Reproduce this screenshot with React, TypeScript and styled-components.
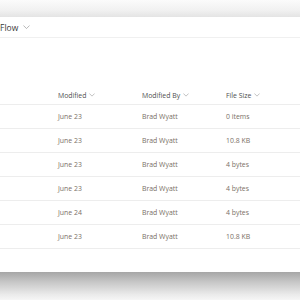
import React from "react";
import styled, { createGlobalStyle } from "styled-components";

const Global = createGlobalStyle`
  html, body { margin: 0; padding: 0; background: #ffffff; }
  body { width: 300px; height: 300px; overflow: hidden; font-family: "Open Sans", "Noto Sans", sans-serif; }
`;

const Page = styled.div`
  display: flex;
  flex-direction: column;
  width: 300px;
  height: 300px;
`;

const TopStrip = styled.div`
  height: 17px;
  background: linear-gradient(#fbfbfb, #f1f1f1 60%, #e4e4e4);
`;

const Card = styled.div`
  height: 255px;
  background: #ffffff;
  display: flex;
  flex-direction: column;
`;

const TitleBar = styled.div`
  height: 20px;
  border-bottom: 1px solid #f0f0f0;
  display: flex;
  align-items: center;
  gap: 5px;
  font-size: 8.5px;
  color: #3a3a3a;
`;

const Spacer = styled.div`
  height: 48px;
`;

const Row = styled.div<{ $header?: boolean }>`
  display: grid;
  grid-template-columns: 84px 84px 84px;
  padding-left: 58px;
  height: ${(p) => (p.$header ? 18 : 23)}px;
  align-items: center;
  border-bottom: 1px solid #ededed;
  font-size: 6.9px;
  color: ${(p) => (p.$header ? "#4f4f4f" : "#7a6f66")};
`;

const HeadCell = styled.div`
  display: flex;
  align-items: center;
  gap: 3px;
`;

const Cell = styled.div``;

const Shadow = styled.div`
  height: 28px;
  background: linear-gradient(#a6a6a6, #c6c6c6 35%, #eaeaea 80%, #f6f6f6);
`;

const Chevron = ({ w = 7 }: { w?: number }) => (
  <svg width={w} height={w / 2 + 1} viewBox="0 0 8 5" fill="none">
    <polyline points="0.5,0.5 4,4 7.5,0.5" stroke="#9a9a9a" strokeWidth="0.8" />
  </svg>
);

const rows = [
  ["June 23", "Brad Wyatt", "0 items"],
  ["June 23", "Brad Wyatt", "10.8 KB"],
  ["June 23", "Brad Wyatt", "4 bytes"],
  ["June 23", "Brad Wyatt", "4 bytes"],
  ["June 24", "Brad Wyatt", "4 bytes"],
  ["June 23", "Brad Wyatt", "10.8 KB"],
];

export default function App() {
  return (
    <Page>
      <Global />
      <TopStrip />
      <Card>
        <TitleBar>
          <span>Flow</span>
          <Chevron w={7} />
        </TitleBar>
        <Spacer />
        <Row $header>
          <HeadCell>Modified <Chevron w={6} /></HeadCell>
          <HeadCell>Modified By <Chevron w={6} /></HeadCell>
          <HeadCell>File Size <Chevron w={6} /></HeadCell>
        </Row>
        {rows.map((r, i) => (
          <Row key={i}>
            {r.map((c, j) => (
              <Cell key={j}>{c}</Cell>
            ))}
          </Row>
        ))}
      </Card>
      <Shadow />
    </Page>
  );
}
